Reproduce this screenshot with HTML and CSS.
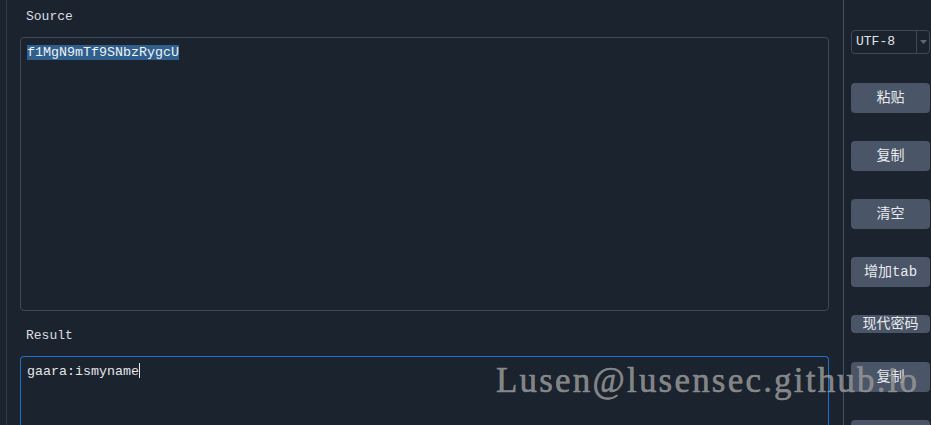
FILE: index.html
```html
<!DOCTYPE html>
<html>
<head>
<meta charset="utf-8">
<link rel="stylesheet" href="styles.css">
</head>
<body>
<div class="rail"></div>
<div class="main">
  <div class="label label-source">Source</div>
  <div class="box box-source"><span class="sel">f1MgN9mTf9SNbzRygcU</span></div>
  <div class="label label-result">Result</div>
  <div class="box box-result">gaara:ismyname<span class="caret"></span></div>
</div>
<div class="divider"></div>
<div class="side">
  <div class="select"><span class="select-text">UTF-8</span><span class="select-arrow"><svg width="7" height="4" viewBox="0 0 7 4"><path d="M0 0H7L3.5 4Z" fill="#5d6879"/></svg></span></div>
  <div class="btn">粘贴</div>
  <div class="btn">复制</div>
  <div class="btn">清空</div>
  <div class="btn">增加tab</div>
  <div class="btn btn-small">现代密码</div>
  <div class="btn">复制</div>
  <div class="btn btn-cut"></div>
</div>
<div class="watermark">Lusen@lusensec.github.io</div>
</body>
</html>
```

FILE: styles.css
```css
html, body {
  margin: 0;
  padding: 0;
}
body {
  width: 931px;
  height: 425px;
  overflow: hidden;
  background: #1b232e;
  display: flex;
  align-items: stretch;
  position: relative;
  color: #dfe2e6;
  font-family: "Liberation Mono", "Noto Sans CJK SC", monospace;
}
.rail {
  width: 6px;
  flex: 0 0 auto;
  border-right: 1px solid #2e3947;
}
.main {
  flex: 0 0 auto;
  width: 809px;
  margin-left: 13px;
  display: flex;
  flex-direction: column;
  overflow: hidden;
}
.label {
  flex: 0 0 auto;
  font-size: 13px;
  line-height: 15px;
  padding-left: 6px;
  color: #dcdfe3;
  box-sizing: border-box;
}
.label-source {
  height: 37px;
  padding-top: 9px;
}
.label-result {
  height: 45px;
  padding-top: 17px;
}
.box {
  box-sizing: border-box;
  border: 1px solid #3e4959;
  border-radius: 4px;
  padding: 6px;
  font-size: 13.33px;
  line-height: 17px;
  color: #e4e6e9;
  flex: 0 0 auto;
}
.box-source {
  height: 274px;
}
.box-result {
  height: 69px;
  border-color: #1c72cc;
  border-bottom: none;
  border-radius: 4px 4px 0 0;
}
.sel {
  background: #2e5f8d;
  color: #f0f2f4;
}
.caret {
  display: inline-block;
  width: 1px;
  height: 15px;
  background: #e4e6e9;
  vertical-align: -3px;
}
.divider {
  flex: 0 0 auto;
  width: 1px;
  margin-left: 14px;
  background: #465263;
}
.side {
  flex: 0 0 auto;
  width: 79px;
  margin-left: 7px;
  padding-top: 30px;
  display: flex;
  flex-direction: column;
  gap: 28px;
  overflow: hidden;
}
.select {
  box-sizing: border-box;
  height: 24px;
  border: 1px solid #3e4959;
  border-radius: 4px;
  display: flex;
  margin-bottom: 1px;
  flex: 0 0 auto;
}
.select-text {
  flex: 1;
  font-size: 13px;
  line-height: 22px;
  padding-left: 4px;
  color: #e2e4e8;
}
.select-arrow {
  width: 12px;
  border-left: 1px solid #3e4959;
  display: flex;
  align-items: center;
  justify-content: center;
}
.btn {
  flex: 0 0 auto;
  height: 30px;
  border-radius: 4px;
  background: #4a5567;
  color: #e8eaed;
  font-size: 14px;
  line-height: 30px;
  text-align: center;
  font-family: "Liberation Mono", "Noto Sans CJK SC", monospace;
}
.btn-small {
  height: 18px;
  line-height: 18px;
  margin-bottom: 1px;
}
.btn-cut {
  height: 5px;
  border-radius: 4px 4px 0 0;
}
.watermark {
  position: absolute;
  left: 496px;
  top: 361px;
  font-family: "Liberation Serif", serif;
  font-size: 35px;
  line-height: 40px;
  letter-spacing: 2.2px;
  color: rgba(150, 150, 150, 0.85);
  -webkit-text-stroke: 0.6px rgba(150, 150, 150, 0.85);
  white-space: nowrap;
}
```
